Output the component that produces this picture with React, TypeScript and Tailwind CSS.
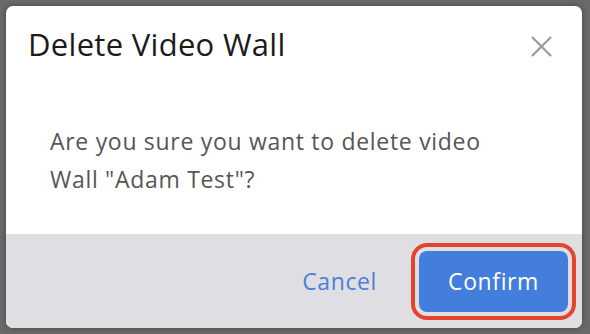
export default function App() {
  return (
    <div
      className="w-[590px] h-[334px] bg-[#6a6a6a] pl-[6px] pr-[8px] pt-[6px] pb-[6px] flex"
      style={{ fontFamily: '"Open Sans", "Noto Sans", sans-serif' }}
    >
      <div className="flex-1 flex flex-col rounded-[7px] overflow-hidden bg-white shadow-[0_0_6px_rgba(0,0,0,0.35)]">
        {/* Header */}
        <div className="flex items-start justify-between pl-[22px] pr-[30px] pt-[20px]">
          <h2 className="text-[31px] leading-[36px] text-[#1b1b1b] tracking-[0.3px]">Delete Video Wall</h2>
          <button className="mt-[10px] w-[21px] h-[21px] text-[#9a9a9a]" aria-label="Close">
            <svg viewBox="0 0 21 21" className="w-full h-full" fill="none" stroke="currentColor" strokeWidth="2.2">
              <path d="M1 1L20 20M20 1L1 20" />
            </svg>
          </button>
        </div>

        {/* Body */}
        <div className="flex-1 pl-[44px] pt-[60px]">
          <p className="w-[470px] text-[23px] leading-[38px] text-[#565656] tracking-[0.7px]">
            Are you sure you want to delete video Wall "Adam Test"?
          </p>
        </div>

        {/* Footer */}
        <div className="h-[94px] bg-[#dfdfe3] flex items-center justify-end gap-[42px] pr-[14px]">
          <button className="text-[23px] text-[#4a80d9] tracking-[0.6px]">Cancel</button>
          <button className="w-[149px] h-[61px] rounded-[8px] bg-[#437edc] text-white text-[23px] tracking-[0.6px] outline-[4px] outline-solid outline-[#e4432d] outline-offset-[4px]">
            Confirm
          </button>
        </div>
      </div>
    </div>
  );
}
